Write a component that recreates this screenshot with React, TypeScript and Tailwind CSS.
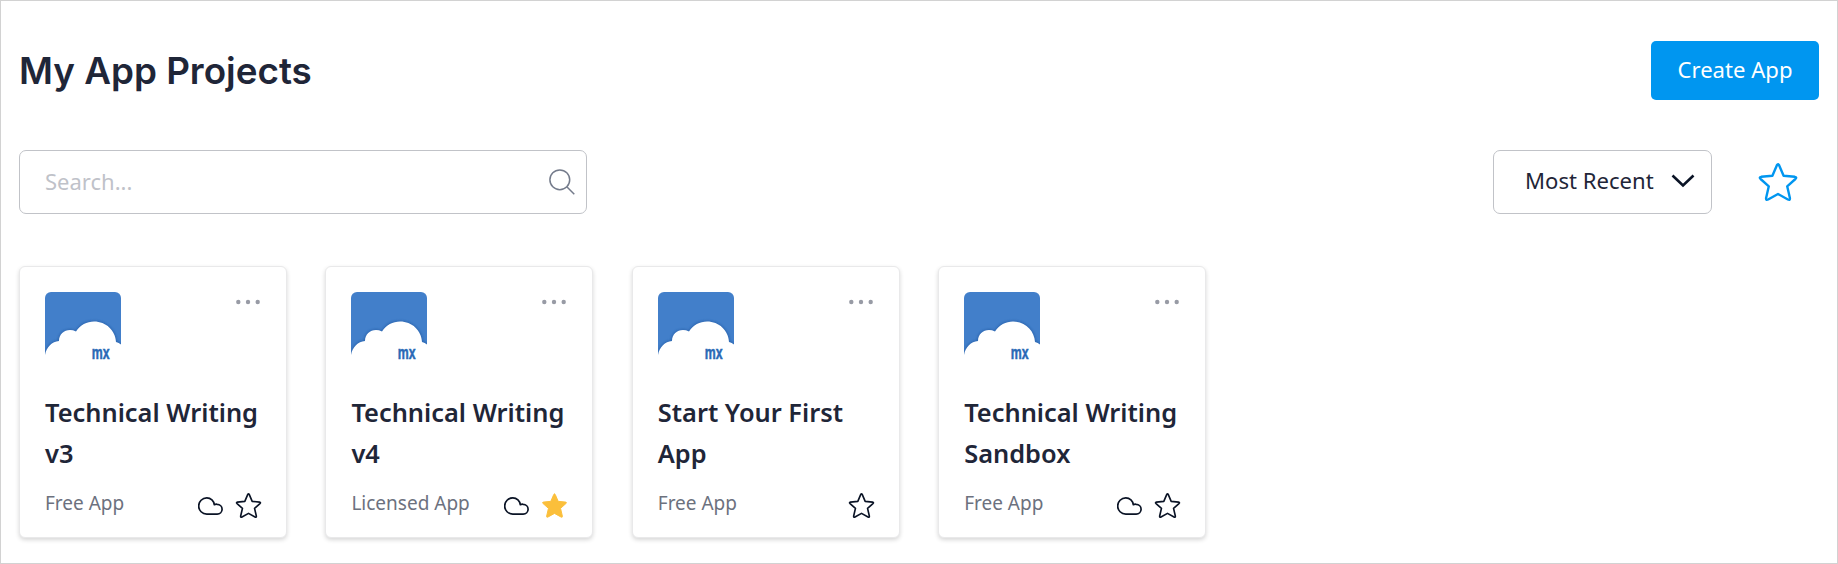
import React from "react";

type Project = { title: [string, string]; license: string; cloud: boolean; favorite: boolean };

const projects: Project[] = [
  { title: ["Technical Writing", "v3"], license: "Free App", cloud: true, favorite: false },
  { title: ["Technical Writing", "v4"], license: "Licensed App", cloud: true, favorite: true },
  { title: ["Start Your First", "App"], license: "Free App", cloud: false, favorite: false },
  { title: ["Technical Writing", "Sandbox"], license: "Free App", cloud: true, favorite: false },
];

const STAR =
  "M17.9 2.2 Q19 0.2 20.1 2.2 L24.6 12.7 L35.8 13.8 Q38.2 14.3 36.4 16 L28.2 23.3 L30.9 35 Q31.2 37.6 28.9 36.5 L19 31 L9.1 36.5 Q6.8 37.6 7.1 35 L9.8 23.3 L1.6 16 Q-0.2 14.3 2.2 13.8 L13.4 12.7 Z";

function Star({ className, strokeWidth }: { className: string; strokeWidth: number }) {
  return (
    <svg viewBox="0 0 38 38" className={className} strokeWidth={strokeWidth} strokeLinejoin="round" stroke="currentColor" overflow="visible">
      <path d={STAR} />
    </svg>
  );
}

function Cloud() {
  return (
    <svg viewBox="0 0 25 18" className="h-[18px] w-[25px] text-[#0a1325]" fill="none" stroke="currentColor" strokeWidth="1.7" strokeLinejoin="round">
      <path d="M8.8 17.1 H19.2 A4.9 4.9 0 0 0 19.2 7.3 C18.2 7.1 17.1 7.3 16.3 7.7 C16 3.9 12.8 0.9 8.8 0.9 A8.1 8.1 0 0 0 8.8 17.1 Z" />
    </svg>
  );
}

function AppLogo() {
  return (
    <svg viewBox="0 0 76 76" className="h-[76px] w-[76px]">
      <defs>
        <clipPath id="tile">
          <path d="M0 76 V6 A6 6 0 0 1 6 0 H70 A6 6 0 0 1 76 6 V76 Z" />
        </clipPath>
        <filter id="cloudShade" x="-10%" y="-10%" width="120%" height="120%">
          <feGaussianBlur stdDeviation="1" />
        </filter>
      </defs>
      <g clipPath="url(#tile)">
        <path d="M0 0 H76 V53 L0 64 Z" fill="#427fca" />
        <path d="M0 63 C1.5 55 7 49.5 14 49 C14 40 23 35.5 31 39.5 C35 33 42 29.5 49 29.5 C61 29.5 70.5 38.5 71 50 C73 50.5 74.5 51.3 76 52.5" fill="none" stroke="#2459a0" strokeWidth="2" opacity="0.65" filter="url(#cloudShade)" />
        <path d="M0 76 V63 C1.5 55 7 49.5 14 49 C14 40 23 35.5 31 39.5 C35 33 42 29.5 49 29.5 C61 29.5 70.5 38.5 71 50 C73 50.5 74.5 51.3 76 52.5 V76 Z" fill="#fff" />
      </g>
      <text x="46.8" y="66.6" fontFamily="'Liberation Sans', sans-serif" fontWeight="700" fontSize="17.5" textLength="17.8" lengthAdjust="spacingAndGlyphs" fill="#2a69b6" stroke="#2a69b6" strokeWidth="0.5">mx</text>
    </svg>
  );
}

function Card({ project }: { project: Project }) {
  return (
    <article className="flex h-[272px] w-[268px] flex-col rounded-md border border-[#e9e9ea] bg-white pr-[25px] pl-[25px] pt-[25px] shadow-[0_2px_4px_rgba(0,0,0,0.16)]">
      <div className="flex h-[100px] items-start justify-between">
        <AppLogo />
        <svg viewBox="0 0 26 6" className="mt-[7px] h-1.5 w-[26px] fill-[#989ba5]">
          <circle cx="3.3" cy="3" r="2.2" />
          <circle cx="13" cy="3" r="2.2" />
          <circle cx="22.7" cy="3" r="2.2" />
        </svg>
      </div>
      <h2 className="text-[25.4px] leading-[41px] font-semibold whitespace-nowrap text-[#1f2638]">
        {project.title[0]}
        <br />
        {project.title[1]}
      </h2>
      <div className="mt-[15px] flex h-7 items-start">
        <span className="text-[19px] leading-[29px] whitespace-nowrap text-[#6c717e]">{project.license}</span>
        <div className="mt-[4px] ml-auto flex items-center gap-[13px]">
          {project.cloud && <Cloud />}
          {project.favorite ? (
            <Star className="h-[25px] w-[25px] fill-[#fbbf3b] text-[#fbbf3b]" strokeWidth={1.5} />
          ) : (
            <Star className="h-[25px] w-[25px] fill-none text-[#0a1325]" strokeWidth={2.5} />
          )}
        </div>
      </div>
    </article>
  );
}

export default function App() {
  return (
    <main className="h-[564px] w-full border border-[#d2d2d2] bg-white px-[18px] pt-10 font-['Noto_Sans',sans-serif]">
      <header className="flex h-[59px] items-center justify-between">
        <h1 className="font-['Inter',sans-serif] text-[36.8px] font-semibold whitespace-nowrap text-[#1f2638]">My App Projects</h1>
        <button className="h-[59px] w-[168px] rounded-[5px] bg-[#0096f0] pb-0.5 text-[22.1px] text-white">Create App</button>
      </header>
      <section className="mt-[50px] flex h-16 items-center justify-between">
        <label className="flex h-16 w-[568px] items-center justify-between rounded-[7px] border border-[#c1c3c8] pr-[11px] pl-[25px]">
          <span className="pb-0.5 text-[22px] text-[#bfc2c9]">Search...</span>
          <svg viewBox="0 0 26 26" className="h-[26px] w-[26px] text-[#747b8b]" fill="none" stroke="currentColor" strokeWidth="1.5">
            <circle cx="10.8" cy="10.8" r="9.9" />
            <path d="M17.8 17.8 L25.3 25.3" />
          </svg>
        </label>
        <div className="flex items-center">
          <button className="flex h-16 w-[219px] items-center justify-between rounded-[7px] border border-[#c1c3c8] pr-4 pl-[31px] text-[22.1px] whitespace-nowrap text-[#1f2638]">
            <span className="pb-0.5">Most Recent</span>
            <svg viewBox="0 0 24 14" className="mb-0.5 h-3.5 w-6" fill="none" stroke="#0a1325" strokeWidth="2.6">
              <path d="M1.5 1.5 L12 11.5 L22.5 1.5" />
            </svg>
          </button>
          <Star className="mr-[22px] ml-[47px] h-[38px] w-[38px] fill-none text-[#0096f0]" strokeWidth={2.4} />
        </div>
      </section>
      <section className="mt-[52px] flex gap-[38.4px]">
        {projects.map((project) => (
          <Card key={project.title.join(" ")} project={project} />
        ))}
      </section>
    </main>
  );
}
